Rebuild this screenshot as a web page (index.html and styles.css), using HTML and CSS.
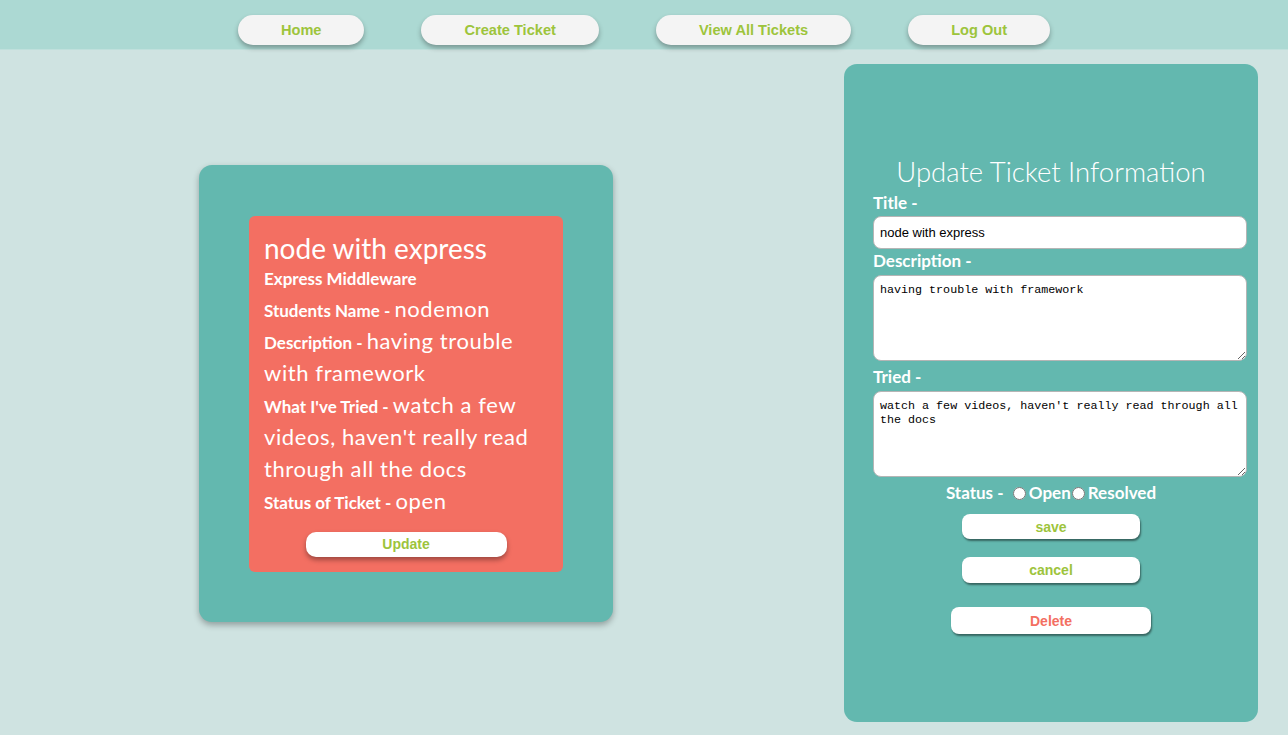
FILE: index.html
```html
<!DOCTYPE html>
<html lang="en">
<head>
<meta charset="utf-8">
<title>Tickets</title>
<link rel="stylesheet" href="styles.css">
</head>
<body>
<header class="topbar">
  <nav class="nav">
    <a class="nav-btn" href="#">Home</a>
    <a class="nav-btn" href="#">Create Ticket</a>
    <a class="nav-btn" href="#">View All Tickets</a>
    <a class="nav-btn" href="#">Log Out</a>
  </nav>
</header>
<main class="content">
  <section class="card">
    <div class="ticket">
      <h2 class="ticket-title">node with express</h2>
      <h3 class="ticket-topic">Express Middleware</h3>
      <p class="row"><span class="key">Students Name - </span>nodemon</p>
      <p class="row"><span class="key">Description - </span>having trouble with framework</p>
      <p class="row"><span class="key">What I've Tried - </span>watch a few videos, haven't really read through all the docs</p>
      <p class="row"><span class="key">Status of Ticket - </span>open</p>
      <div class="ticket-actions"><button class="btn btn-update" type="button">Update</button></div>
    </div>
  </section>
  <aside class="panel">
    <h2 class="panel-title">Update Ticket Information</h2>
    <form class="form">
      <label class="label" for="title">Title -</label>
      <input class="field" id="title" type="text" value="node with express">
      <label class="label label-gap" for="desc">Description -</label>
      <textarea class="area" id="desc">having trouble with framework</textarea>
      <label class="label label-gap2" for="tried">Tried -</label>
      <textarea class="area" id="tried">watch a few videos, haven't really read through all the docs</textarea>
      <div class="status">Status - &nbsp;<input type="radio" name="st" class="radio">Open<input type="radio" name="st" class="radio">Resolved</div>
      <button class="btn btn-save" type="button">save</button>
      <button class="btn btn-cancel" type="button">cancel</button>
      <button class="btn btn-delete" type="button">Delete</button>
    </form>
  </aside>
</main>
</body>
</html>
```
FILE: styles.css
```css
* { box-sizing: border-box; }
html, body { margin: 0; padding: 0; }
body {
  background: #cfe3e1;
  font-family: Lato, "Open Sans", sans-serif;
  color: #ffffff;
  height: 735px;
  overflow: hidden;
}
.topbar {
  height: 50px;
  background: #acd9d3;
  border-bottom: 1px solid #bfe0dc;
  display: flex;
  justify-content: center;
  padding-top: 15px;
}
.nav {
  display: flex;
  gap: 57px;
}
.nav-btn {
  display: block;
  height: 30px;
  line-height: 30px;
  padding: 0 43px;
  background: #f4f4f4;
  border-radius: 15px;
  box-shadow: 0 3px 5px rgba(0, 0, 0, 0.3);
  color: #9dc43c;
  font-family: "Liberation Sans", Arial, sans-serif;
  font-weight: 700;
  font-size: 14.6px;
  text-decoration: none;
}
.content {
  display: flex;
  align-items: center;
  padding: 14px 30px 0 199px;
  gap: 231px;
}
.card {
  width: 414px;
  height: 457px;
  background: #63b8af;
  border-radius: 13px;
  box-shadow: 0 3px 6px rgba(0, 0, 0, 0.3);
  padding: 51px 50px;
}
.ticket {
  background: #f36f62;
  border-radius: 6px;
  padding: 16px 15px 15px;
}
.ticket-title {
  margin: 0;
  font-size: 28px;
  font-weight: 400;
  line-height: 32px;
}
.ticket-topic {
  margin: 0;
  font-size: 17px;
  font-weight: 700;
  line-height: 28px;
  padding-top: 1px;
}
.row {
  margin: 0;
  font-size: 22px;
  letter-spacing: 0.6px;
  font-weight: 400;
  line-height: 32px;
}
.key {
  font-size: 17px;
  font-weight: 700;
  letter-spacing: 0;
  line-height: 20px;
}
.ticket-actions {
  display: flex;
  justify-content: center;
  margin-top: 15px;
}
.btn {
  display: block;
  height: 25px;
  border: none;
  background: #ffffff;
  font-family: "Liberation Sans", Arial, sans-serif;
  font-weight: 700;
  font-size: 14px;
  color: #9dc43c;
  cursor: pointer;
  padding: 0;
}
.btn-update {
  width: 201px;
  border-radius: 10px;
  box-shadow: 0 3px 5px rgba(0, 0, 0, 0.35);
}
.panel {
  width: 414px;
  height: 658px;
  background: #63b8af;
  border-radius: 13px;
  padding-top: 93px;
}
.panel-title {
  margin: 0;
  text-align: center;
  font-size: 27.5px;
  font-weight: 300;
  line-height: 30px;
}
.form {
  display: flex;
  flex-direction: column;
  align-items: center;
  margin-top: 6px;
}
.label {
  align-self: flex-start;
  display: block;
  margin-left: 29px;
  font-size: 17px;
  font-weight: 700;
  line-height: 20px;
  margin-bottom: 3px;
}
.label-gap { margin-top: 2px; margin-bottom: 4px; }
.label-gap2 { margin-top: 6px; margin-bottom: 4px; }
.field, .area {
  display: block;
  width: 374px;
  align-self: flex-start;
  margin: 0 0 0 29px;
  background: #ffffff;
  border: 1px solid #b5b5b5;
  border-radius: 8px;
  color: #000000;
  padding: 0 6px;
}
.field {
  height: 33px;
  font-family: "Liberation Sans", Arial, sans-serif;
  font-size: 13px;
}
.area {
  height: 86px;
  font-family: "Liberation Mono", "Courier New", monospace;
  font-size: 11.7px;
  line-height: 14px;
  padding-top: 7px;
  resize: vertical;
}
.status {
  margin-top: 6px;
  display: flex;
  align-items: center;
  font-size: 17px;
  font-weight: 700;
  line-height: 20px;
}
.radio {
  margin: 0 3px 0 1px;
  width: 13px;
  height: 13px;
}
.btn-save, .btn-cancel {
  width: 178px;
  border-radius: 8px;
  box-shadow: 1px 2px 2px rgba(0, 0, 0, 0.45);
}
.btn-save { margin-top: 11px; }
.btn-cancel { margin-top: 18px; height: 26px; }
.btn-delete {
  margin-top: 24px;
  width: 200px;
  height: 27px;
  border-radius: 8px;
  box-shadow: 1px 2px 2px rgba(0, 0, 0, 0.45);
  color: #f36f62;
}
```
